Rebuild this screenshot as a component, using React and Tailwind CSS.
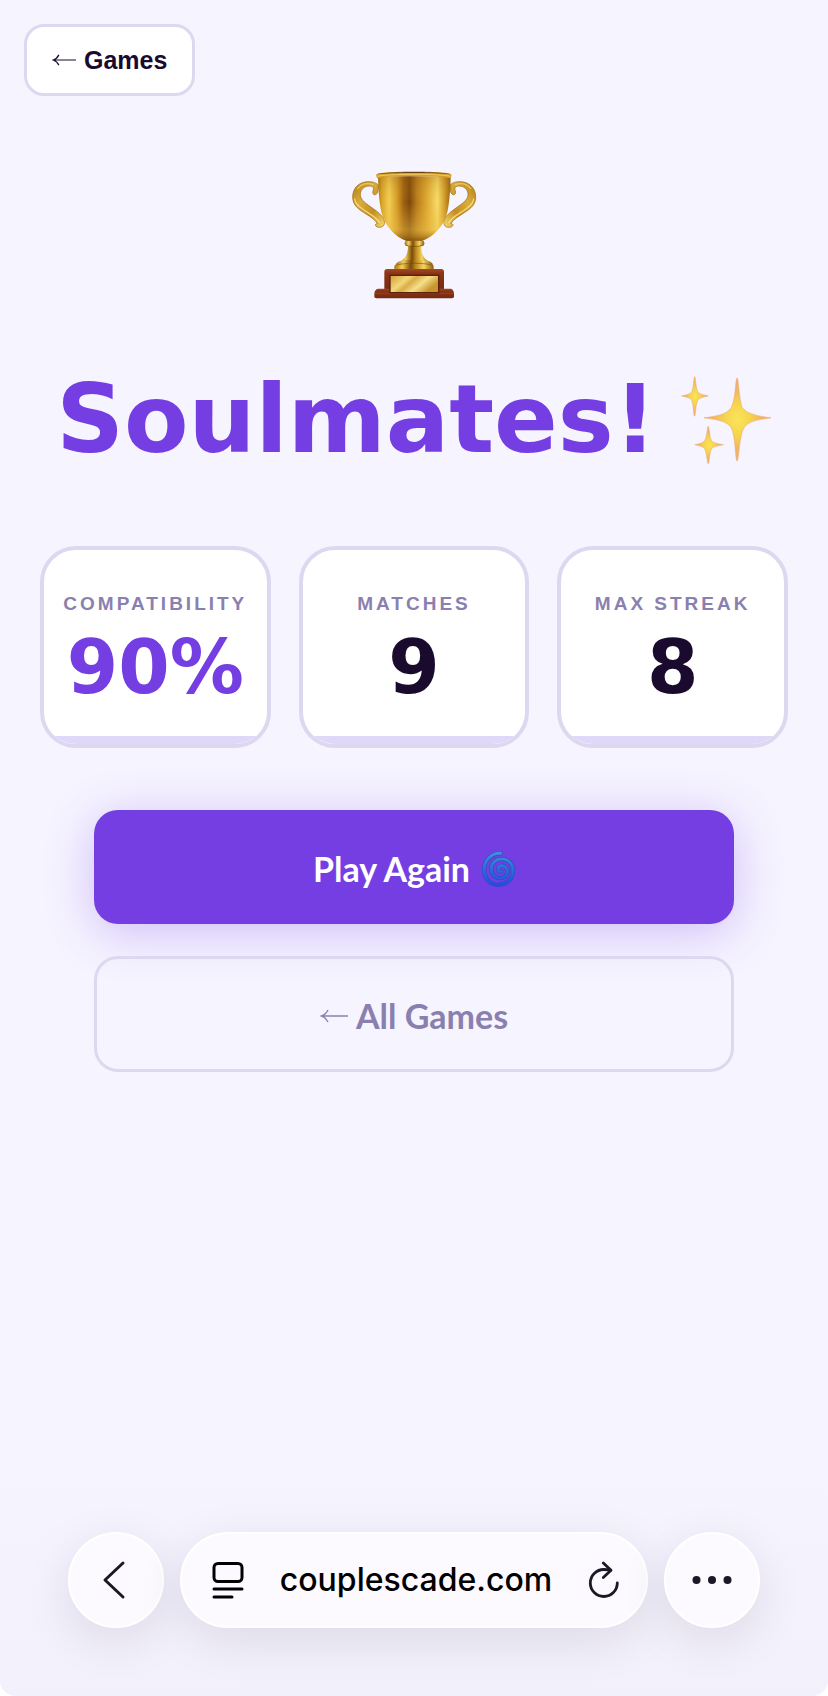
import { useState } from 'react';

const stats = [
  { label: 'Compatibility', value: '90%', color: 'text-[#743ee3]' },
  { label: 'Matches', value: '9', color: 'text-[#1a0b2e]' },
  { label: 'Max Streak', value: '8', color: 'text-[#1a0b2e]' },
];

function Arrow({ className }) {
  return (
    <svg viewBox="0 0 28 14" className={className} fill="none" stroke="currentColor" strokeWidth="1.4" aria-hidden="true">
      <path d="M28 7H1.500M8 1C6.500 4 4.500 6 1.500 7c3 1 5 3 6.500 6" />
    </svg>
  );
}

function Trophy() {
  return (
    <svg viewBox="66 64 378 384" className="h-32 w-[126px]" role="img" aria-label="Trophy">
      <defs>
        <linearGradient id="bowl" x1="145" x2="365" y1="0" y2="0" gradientUnits="userSpaceOnUse">
          <stop offset="0" stopColor="#a66d0c" />
          <stop offset=".06" stopColor="#d9a326" />
          <stop offset=".16" stopColor="#f3cf55" />
          <stop offset=".27" stopColor="#d59b27" />
          <stop offset=".36" stopColor="#9c5f10" />
          <stop offset=".44" stopColor="#7e480b" />
          <stop offset=".54" stopColor="#b97c1a" />
          <stop offset=".68" stopColor="#dfab34" />
          <stop offset=".82" stopColor="#f8dc67" />
          <stop offset=".92" stopColor="#d09a28" />
          <stop offset="1" stopColor="#96610c" />
        </linearGradient>
        <linearGradient id="shade" x1="0" x2="0" y1="80" y2="275" gradientUnits="userSpaceOnUse">
          <stop offset="0" stopColor="#8a560a" stopOpacity=".25" />
          <stop offset=".4" stopColor="#e6b640" stopOpacity="0" />
          <stop offset=".82" stopColor="#e9bd47" stopOpacity=".45" />
          <stop offset="1" stopColor="#7d4b08" stopOpacity=".8" />
        </linearGradient>
        <linearGradient id="stem">
          <stop offset="0" stopColor="#a87212" />
          <stop offset=".2" stopColor="#f3d05b" />
          <stop offset=".42" stopColor="#7a4a08" />
          <stop offset=".55" stopColor="#c08a20" />
          <stop offset=".75" stopColor="#f5d562" />
          <stop offset="1" stopColor="#8e5b0b" />
        </linearGradient>
        <linearGradient id="handle" x1="0" x2="1" y1="0" y2="1">
          <stop offset="0" stopColor="#b27d17" />
          <stop offset=".35" stopColor="#d9ad3b" />
          <stop offset=".65" stopColor="#c58f20" />
          <stop offset="1" stopColor="#f6dc70" />
        </linearGradient>
        <linearGradient id="wood" x1="0" x2="0" y1="0" y2="1">
          <stop offset="0" stopColor="#a34a22" />
          <stop offset=".2" stopColor="#8a3515" />
          <stop offset="1" stopColor="#742a10" />
        </linearGradient>
        <linearGradient id="plate" x1="0" x2="1" y1="0" y2=".4">
          <stop offset="0" stopColor="#d3a03a" />
          <stop offset=".35" stopColor="#f2d878" />
          <stop offset=".5" stopColor="#d9ad48" />
          <stop offset=".72" stopColor="#f5e08a" />
          <stop offset="1" stopColor="#c8962f" />
        </linearGradient>
        <g id="trophyHandle">
          <path
            d="M148 106C139 97 124 94 108 97C84 101 70 121 71 144C72 165 85 176 102 187C120 199 138 209 145 222C136 221 137 233 151 233C165 233 170 222 164 208C157 193 139 182 123 170C106 158 93 148 94 133C95 119 106 109 121 109C130 109 135 113 133 121C129 130 133 137 139 135C145 133 149 126 148 106Z"
            fill="url(#handle)"
            stroke="#9a6713"
            strokeWidth="2"
          />
          <path d="M77 148c2 17 19 27 35 38 18 12 34 21 40 33" fill="none" stroke="#fae58a" strokeWidth="4" strokeLinecap="round" opacity=".8" />
          <path d="M86 117c10-15 27-18 46-13" fill="none" stroke="#f2d362" strokeWidth="4" strokeLinecap="round" opacity=".8" />
        </g>
      </defs>

      <use href="#trophyHandle" />
      <use href="#trophyHandle" transform="matrix(-1 0 0 1 511 0)" />

      {/* stem and foot */}
      <path d="M236 280h42c-4 28 4 47 24 57H211c20-10 29-30 25-57Z" fill="url(#stem)" />
      <rect x="227" y="272" width="59" height="18" rx="9" fill="url(#stem)" />
      <path d="M229 286c15 6 39 6 54 0" stroke="#6e4107" strokeWidth="3" fill="none" opacity=".6" />
      <path d="M201 344c0-9 21-14 55-14s55 5 55 14v6H201Z" fill="url(#stem)" />
      <rect x="196" y="344" width="118" height="19" rx="8" fill="url(#stem)" />
      <path d="M203 346c28-7 78-7 105 0" stroke="#784908" strokeWidth="3" fill="none" opacity=".6" />

      {/* bowl */}
      <path d="M147 80h218c-1 34-3 75-10 107-11 44-44 76-75 86h-48c-33-11-64-43-75-86-7-32-9-73-10-107Z" fill="url(#bowl)" />
      <path d="M147 80h218c-1 34-3 75-10 107-11 44-44 76-75 86h-48c-33-11-64-43-75-86-7-32-9-73-10-107Z" fill="url(#shade)" />
      <path d="M142 74c20-11 205-11 225 0 1 6-1 10-4 12-28-9-189-9-217 0-4-3-5-7-4-12Z" fill="#d6a02d" />
      <path d="M144 74c20-9 201-9 221 0-34-5-187-5-221 0Z" fill="#6d420c" />
      <path d="M145 80c30-8 190-8 219 0" fill="none" stroke="#f7df7b" strokeWidth="2" />

      {/* wooden base */}
      <path d="M174 358h163q8 0 8 8v56H166v-56q0-8 8-8Z" fill="url(#wood)" />
      <path d="M146 417h220q9 4 9 16v7q0 6-6 6H142q-6 0-6-6v-7q0-12 10-16Z" fill="url(#wood)" />
      <path d="M137 432h237" stroke="#b65d31" strokeWidth="2" opacity=".6" />
      <rect x="181" y="375" width="150" height="56" fill="#5c200b" />
      <rect x="185" y="379" width="142" height="48" fill="url(#plate)" />
    </svg>
  );
}

function Sparkles() {
  return (
    <svg viewBox="748 44 272 268" className="h-[89px] w-[91px] shrink-0" role="img" aria-label="Sparkles">
      <defs>
        <radialGradient id="glow">
          <stop offset="0" stopColor="#fbe45a" />
          <stop offset=".4" stopColor="#f5d44c" />
          <stop offset=".7" stopColor="#f2b562" />
          <stop offset="1" stopColor="#eda882" />
        </radialGradient>
      </defs>
      <g fill="url(#glow)" stroke="#eeb173" strokeWidth="2">
        <path d="M916 50c4 0 5 57 15 88 12 20 49 27 87 32-38 5-70 10-82 31-14 25-15 99-20 99s-5-74-17-99c-12-21-43-26-83-31 38-5 70-10 83-32 13-28 12-88 17-88Z" />
        <path d="M788 46c3 0 3 34 10 46 5 7 17 9 31 12-14 3-26 5-31 12-8 13-7 49-10 49s-3-36-9-49c-5-7-16-9-30-12 14-3 25-5 30-12 7-13 6-46 9-46Z" />
        <path d="M829 195c3 0 3 31 10 44 5 7 20 9 36 12-16 3-31 5-36 12-7 12-7 45-10 45s-4-33-11-45c-5-7-14-9-29-12 15-3 24-5 29-12 8-12 8-44 11-44Z" />
      </g>
    </svg>
  );
}

function Cyclone() {
  return (
    <svg viewBox="0 0 100 110" className="h-9 w-[33px]" fill="none" strokeLinecap="round" role="img" aria-label="Cyclone">
      <defs>
        <linearGradient id="swirl" x1="0" x2="0" y1="0" y2="110" gradientUnits="userSpaceOnUse">
          <stop offset="0" stopColor="#3e94da" />
          <stop offset=".55" stopColor="#2c69dc" />
          <stop offset="1" stopColor="#2746e4" />
        </linearGradient>
        <path
          id="coil"
          d="M57 7C26 6 6 29 6 58c0 27 20 45 44 45 26 0 44-19 44-43 0-22-16-36-35-36-18 0-31 14-31 31s12 28 27 28c13 0 22-9 22-21 0-10-8-17-16-17s-12 5-12 11c0 5 4 8 9 7"
        />
      </defs>
      <use href="#coil" stroke="#2450bd" strokeWidth="13" />
      <use href="#coil" stroke="url(#swirl)" strokeWidth="9" />
    </svg>
  );
}

function StatCard({ label, value, color }) {
  return (
    <div className="relative flex flex-col items-center gap-3.5 overflow-hidden rounded-[36px] border-4 border-[#ddd8f0] bg-white pt-[42px] pb-10">
      <span className="font-['Liberation_Sans',Arial,sans-serif] text-[19px] leading-6 font-bold tracking-[3px] whitespace-nowrap text-[#8a80b0] uppercase">
        {label}
      </span>
      <span className={`font-['DejaVu_Sans',sans-serif] text-[74px] leading-[74px] font-bold ${color}`}>{value}</span>
      <div className="absolute inset-x-0 bottom-0 h-2 bg-[#e0d8f8]" />
    </div>
  );
}

function BrowserBar() {
  const [url, setUrl] = useState('couplescade.com');
  const glass = 'bg-[#fcfaff] border-2 border-white shadow-[0_12px_48px_rgba(30,20,60,0.1)]';

  return (
    <footer className="mt-auto flex justify-center gap-4 bg-linear-to-b from-[#f6f4ff] to-[#f2f0fa] px-[68px] pt-14 pb-[68px]">
      <button aria-label="Back" className={`flex size-24 shrink-0 items-center justify-center rounded-full ${glass}`}>
        <svg viewBox="0 0 36 40" className="h-10 w-9" fill="none" stroke="#1c1926" strokeWidth="3" strokeLinecap="round" strokeLinejoin="round">
          <path d="M25 3 7 20l18 17" />
        </svg>
      </button>
      <div className={`flex h-24 min-w-0 flex-1 items-center justify-between rounded-full pr-[26px] pl-[30px] ${glass}`}>
        <button aria-label="Page menu" className="shrink-0">
          <svg viewBox="0 0 32 38" className="h-[38px] w-8" fill="none" stroke="#000" strokeWidth="3" strokeLinecap="round">
            <rect x="2" y="2.500" width="28" height="18" rx="4" />
            <path d="M2 28h28M2 36h18" />
          </svg>
        </button>
        <input
          type="text"
          aria-label="Address"
          value={url}
          onChange={(e) => setUrl(e.target.value)}
          className="min-w-0 flex-1 bg-transparent text-center font-['Inter',sans-serif] text-[32px] leading-10 font-medium text-black outline-none"
        />
        <button aria-label="Reload" className="shrink-0">
          <svg viewBox="0 0 32 38" className="h-[38px] w-8" fill="none" stroke="#1c1926" strokeWidth="2.800" strokeLinecap="round" strokeLinejoin="round">
            <path d="M29.300 22A13.500 13.500 0 1 1 15.800 8.500q3 0 7 .6" />
            <path d="m15.300 2 7.700 7.300-7.700 7.200" />
          </svg>
        </button>
      </div>
      <button aria-label="More" className={`flex size-24 shrink-0 items-center justify-center rounded-full ${glass}`}>
        <svg viewBox="0 0 40 8" className="h-2 w-10" fill="#1c1926">
          <circle cx="4.500" cy="4" r="4" />
          <circle cx="20" cy="4" r="4" />
          <circle cx="35.500" cy="4" r="4" />
        </svg>
      </button>
    </footer>
  );
}

export default function App() {
  return (
    <div className="flex min-h-screen flex-col overflow-hidden rounded-b-2xl bg-[#f6f4ff]">
      <header className="p-6">
        <button className="flex h-[72px] items-center gap-2 rounded-[20px] border-[3px] border-[#ddd8f0] bg-white px-[25px] font-['Liberation_Sans',Arial,sans-serif] text-[25px] leading-8 font-bold text-[#1a0b2e]">
          <Arrow className="h-3 w-6" />
          Games
        </button>
      </header>

      <main className="flex flex-col items-center px-10 pt-[51px]">
        <Trophy />
        <h1 className="mt-[73px] flex items-center gap-6 font-['DejaVu_Sans',sans-serif] text-[94px] leading-[96px] font-bold whitespace-nowrap text-[#743ee3]">
          Soulmates!
          <Sparkles />
        </h1>

        <section className="mt-[78px] grid w-full grid-cols-3 gap-7">
          {stats.map((stat) => (
            <StatCard key={stat.label} {...stat} />
          ))}
        </section>

        <div className="mt-[62px] flex w-full max-w-[640px] flex-col gap-8 font-['Lato',sans-serif] text-[34px] leading-[42px] font-bold">
          <button className="flex items-center justify-center gap-3 rounded-3xl bg-[#743ee3] pt-[38px] pb-[34px] text-white shadow-[0_8px_48px_rgba(116,62,227,0.3)]">
            Play Again
            <Cyclone />
          </button>
          <button className="flex items-center justify-center gap-2 rounded-3xl border-[3px] border-[#ddd8f0] pt-9 pb-8 text-[#8a80b0]">
            <Arrow className="h-3.5 w-7" />
            All Games
          </button>
        </div>
      </main>

      <BrowserBar />
    </div>
  );
}
